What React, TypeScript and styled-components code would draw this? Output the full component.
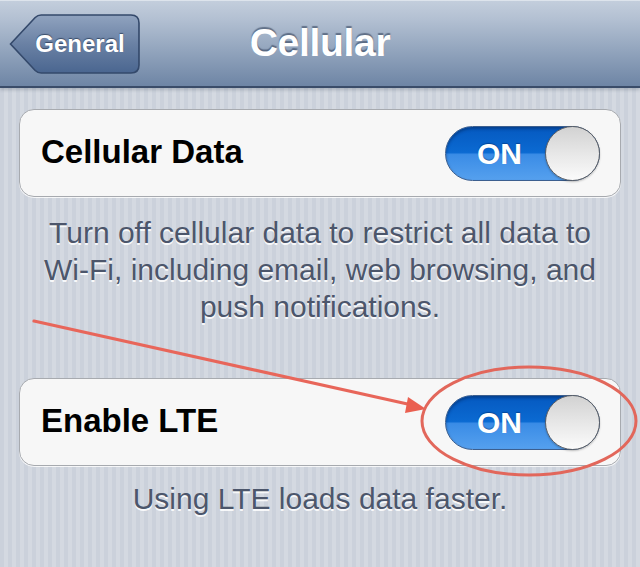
import React, { FC } from 'react'
import styled, { createGlobalStyle } from 'styled-components'

const GlobalStyle = createGlobalStyle`
	html, body {
		margin: 0;
		padding: 0;
	}
	body {
		font-family: 'Liberation Sans', Arial, sans-serif;
		-webkit-font-smoothing: antialiased;
	}
`

interface SwitchProps {
	on: boolean
}

const Switch: FC<SwitchProps> = ({ on }) => (
	<StyledSwitch>
		<StyledSwitchLabel>{on ? 'ON' : 'OFF'}</StyledSwitchLabel>
		<StyledKnob />
	</StyledSwitch>
)

interface RowProps {
	label: string
	on: boolean
}

const ToggleRow: FC<RowProps> = ({ label, on }) => (
	<StyledCell>
		<StyledCellLabel>{label}</StyledCellLabel>
		<Switch on={on} />
	</StyledCell>
)

const BackButton: FC<{ title: string }> = ({ title }) => (
	<StyledBackButton>
		<StyledBackShape viewBox="0 0 130 60" preserveAspectRatio="none">
			<defs>
				<linearGradient id="backFill" x1="0" y1="0" x2="0" y2="1">
					<stop offset="0" stopColor="#90a3bf" />
					<stop offset="0.5" stopColor="#6a81a4" />
					<stop offset="1" stopColor="#4a6690" />
				</linearGradient>
			</defs>
			<path
				d="M1.5 30 L26 3.5 Q28.5 1 32 1 H121 Q129 1 129 9 V51 Q129 59 121 59 H32 Q28.5 59 26 56.5 Z"
				fill="url(#backFill)"
				stroke="#34496b"
				strokeWidth="1.6"
			/>
		</StyledBackShape>
		<StyledBackText>{title}</StyledBackText>
	</StyledBackButton>
)

const Annotation: FC = () => (
	<StyledOverlay viewBox="0 0 640 567">
		<line x1="34" y1="321" x2="412" y2="405" stroke="#e8665a" strokeWidth="3.2" strokeLinecap="round" />
		<polygon points="426,409 408,397 405,413" fill="#ea5f50" />
		<ellipse cx="529" cy="421" rx="107" ry="54" fill="none" stroke="#e2675b" strokeWidth="3" />
	</StyledOverlay>
)

const App: FC = () => (
	<>
		<GlobalStyle />
		<StyledScreen>
			<StyledNavBar>
				<BackButton title="General" />
				<StyledNavTitle>Cellular</StyledNavTitle>
			</StyledNavBar>
			<StyledContent>
				<StyledGroup>
					<ToggleRow label="Cellular Data" on />
					<StyledFooter>
						Turn off cellular data to restrict all data to
						<br />
						Wi-Fi, including email, web browsing, and
						<br />
						push notifications.
					</StyledFooter>
				</StyledGroup>
				<StyledGroup $spaced>
					<ToggleRow label="Enable LTE" on />
					<StyledFooter $small>Using LTE loads data faster.</StyledFooter>
				</StyledGroup>
			</StyledContent>
			<Annotation />
		</StyledScreen>
	</>
)

export default App

const StyledScreen = styled.div`
	position: relative;
	width: 640px;
	height: 567px;
	overflow: hidden;
	background-color: #d0d5de;
	background-image: repeating-linear-gradient(
		90deg,
		#cbd1db 0,
		#cbd1db 4px,
		#d4d9e1 4px,
		#d4d9e1 8px
	);
`

const StyledNavBar = styled.div`
	position: relative;
	height: 88px;
	box-sizing: border-box;
	display: flex;
	align-items: center;
	justify-content: center;
	background: linear-gradient(180deg, #c3cedc 0%, #b4c1d3 20%, #95a7bf 55%, #6e85a5 100%);
	border-top: 1px solid #dde4ec;
	border-bottom: 2px solid #3a4c69;
	box-shadow: 0 2px 3px rgba(60, 70, 90, 0.25);
`

const StyledBackButton = styled.button`
	position: absolute;
	left: 9px;
	top: 13px;
	width: 131px;
	height: 60px;
	padding: 0 0 0 11px;
	border: none;
	background: transparent;
	display: flex;
	align-items: center;
	justify-content: center;
`

const StyledBackShape = styled.svg`
	position: absolute;
	inset: 0;
	width: 100%;
	height: 100%;
`

const StyledBackText = styled.span`
	position: relative;
	font-family: 'Liberation Sans', Arial, sans-serif;
	font-weight: bold;
	font-size: 24px;
	color: #ffffff;
	text-shadow: 0 -1px 1px rgba(20, 35, 60, 0.6);
`

const StyledNavTitle = styled.h1`
	margin: 0 0 2px 0;
	font-family: 'Liberation Sans', Arial, sans-serif;
	font-weight: bold;
	font-size: 39px;
	color: #ffffff;
	text-shadow: 0 -2px 1px rgba(40, 55, 80, 0.55);
	letter-spacing: -0.3px;
`

const StyledContent = styled.div`
	display: flex;
	flex-direction: column;
	padding: 21px 19px 0;
`

const StyledGroup = styled.div<{ $spaced?: boolean }>`
	display: flex;
	flex-direction: column;
	margin-top: ${({ $spaced }) => ($spaced ? '53px' : '0')};
`

const StyledCell = styled.div`
	height: 88px;
	box-sizing: border-box;
	display: flex;
	align-items: center;
	justify-content: space-between;
	padding: 0 20px 0 21px;
	background: #f7f7f7;
	border: 1.5px solid #a7aaaf;
	border-radius: 15px;
	box-shadow: 0 1px 0 rgba(255, 255, 255, 0.8);
`

const StyledCellLabel = styled.span`
	font-family: 'Liberation Sans', Arial, sans-serif;
	font-weight: bold;
	font-size: 33px;
	color: #000000;
	padding-bottom: 2px;
`

const StyledSwitch = styled.div`
	position: relative;
	width: 155px;
	height: 55px;
	box-sizing: border-box;
	border-radius: 28px;
	border: 1px solid #3c5f8f;
	background: linear-gradient(180deg, #0559c0 0%, #0b6ad2 48%, #3a8ce6 52%, #55a0ee 100%);
	box-shadow: inset 0 2px 3px rgba(0, 30, 80, 0.45);
	display: flex;
	align-items: center;
	padding-left: 31px;
	margin-top: 1px;
`

const StyledSwitchLabel = styled.span`
	font-family: 'Liberation Sans', Arial, sans-serif;
	font-weight: bold;
	font-size: 30px;
	color: #ffffff;
	text-shadow: 0 -1px 1px rgba(0, 40, 100, 0.5);
`

const StyledKnob = styled.div`
	position: absolute;
	right: -1px;
	top: -1px;
	width: 55px;
	height: 55px;
	box-sizing: border-box;
	border-radius: 50%;
	border: 1.5px solid #5b5f66;
	background: linear-gradient(180deg, #d2d2d2 0%, #e9e9e9 55%, #fbfbfb 100%);
	box-shadow: 0 1px 2px rgba(0, 0, 0, 0.25);
`

const StyledFooter = styled.p<{ $small?: boolean }>`
	margin: 0;
	padding: ${({ $small }) => ($small ? '14px 10px 0' : '17px 10px 0')};
	text-align: center;
	font-family: 'Liberation Sans', Arial, sans-serif;
	font-size: 30px;
	line-height: 37px;
	color: #4c566b;
	text-shadow: 0 1.5px 0 rgba(255, 255, 255, 0.85);
`

const StyledOverlay = styled.svg`
	position: absolute;
	left: 0;
	top: 0;
	width: 640px;
	height: 567px;
	pointer-events: none;
`
